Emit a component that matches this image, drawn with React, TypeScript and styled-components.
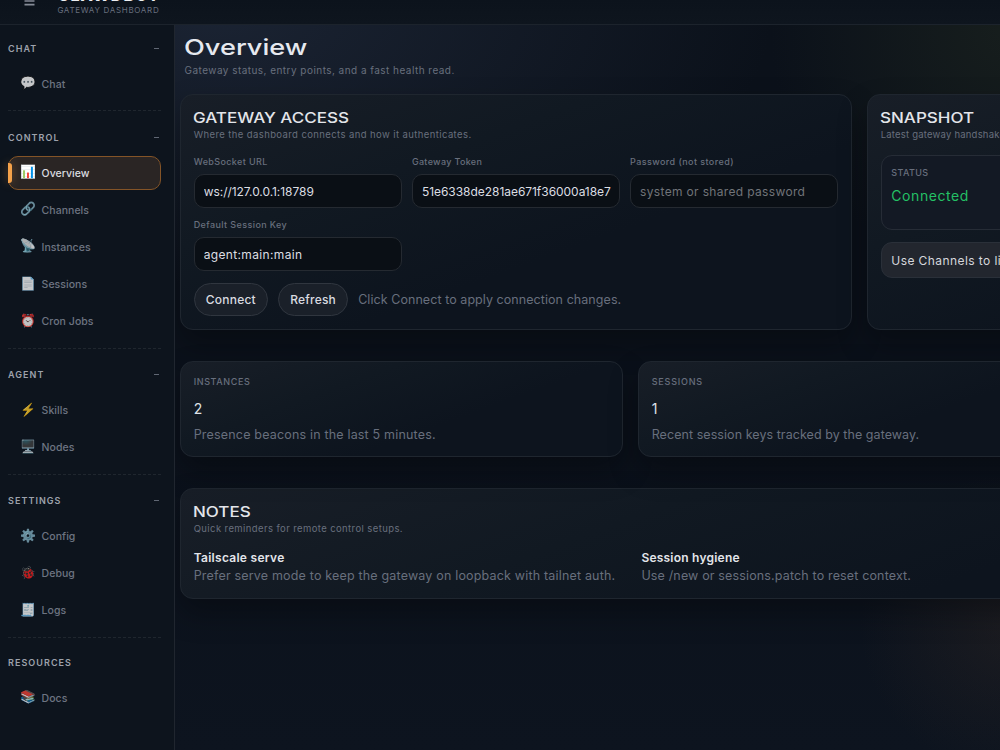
import React from "react";
import styled, { createGlobalStyle } from "styled-components";

const GlobalStyle = createGlobalStyle`
  *, *::before, *::after { box-sizing: border-box; }
  html, body, #root { height: 100%; }
  body {
    margin: 0;
    overflow: hidden;
    background: #0b111b;
    color: #dfe2e8;
    font-family: Inter, "Liberation Sans", sans-serif;
    -webkit-font-smoothing: antialiased;
  }
`;

const muted = "#686f7d";

const Shell = styled.div`
  display: grid;
  grid-template: 25px minmax(0, 1fr) / 175px minmax(0, 1fr);
  width: 100%;
  height: 750px;
  overflow: hidden;
  background:
    radial-gradient(620px 300px at 215px 15px, rgba(48, 60, 84, 0.42), transparent 90%),
    radial-gradient(240px 250px at 1010px 30px, rgba(45, 54, 34, 0.34), transparent),
    radial-gradient(150px 150px at 1010px 625px, rgba(75, 55, 42, 0.24), transparent),
    linear-gradient(180deg, #0b111a 0%, #0b111b 60%, #0d141f 100%);
`;

const Topbar = styled.header`
  grid-column: 1 / -1;
  display: flex;
  align-items: flex-end;
  gap: 22.4px;
  padding: 0 0 9.5px 24px;
  overflow: hidden;
  background: linear-gradient(180deg, #0c131c, #0e151e);
  border-bottom: 1px solid #1c232c;
`;

const MenuIcon = styled.svg`
  flex: none;
  width: 11px;
  height: 10px;
  margin-bottom: 8px;
`;

const Brand = styled.div`
  display: flex;
  flex-direction: column;
  justify-content: flex-end;
  align-self: flex-end;
`;

const BrandName = styled.span`
  height: 17.5px;
  font-size: 16px;
  font-weight: 800;
  line-height: 16px;
  letter-spacing: 1.1px;
  color: #eceef2;
`;

const BrandSub = styled.span`
  font-size: 8px;
  line-height: 10px;
  letter-spacing: 0.69px;
  white-space: nowrap;
  color: ${muted};
`;

const Sidebar = styled.nav`
  padding: 13.5px 13px 0 8px;
  background: #0d141d;
  border-right: 1px solid #20262f;
`;

const Group = styled.section`
  padding-bottom: 9.2px;
  & + & {
    border-top: 1px dashed rgba(255, 255, 255, 0.08);
    padding-top: 15.8px;
  }
`;

const GroupLabel = styled.div<{ $short?: boolean }>`
  display: flex;
  align-items: center;
  justify-content: space-between;
  height: ${(p) => (p.$short ? 18 : 20)}px;
  margin-bottom: ${(p) => (p.$short ? 9.4 : 8.8)}px;
  padding-right: 2px;
  font-size: 9px;
  font-weight: 600;
  letter-spacing: 1.05px;
  color: #9da2ac;
`;

const Dash = styled.span`
  width: 5px;
  height: 1px;
  background: #606773;
`;

const Items = styled.div`
  display: flex;
  flex-direction: column;
  gap: 3.2px;
`;

const Item = styled.a<{ $active?: boolean }>`
  position: relative;
  display: flex;
  align-items: center;
  gap: 6.6px;
  height: 34px;
  padding-left: 11px;
  border: 1px solid ${(p) => (p.$active ? "#845427" : "transparent")};
  border-radius: 10px;
  background: ${(p) => (p.$active ? "#2a2524" : "transparent")};
  color: ${(p) => (p.$active ? "#dcdde0" : "#6d7482")};
  font-size: 10.5px;
  font-weight: 450;
  letter-spacing: 0.04px;
`;

const ActiveMark = styled.i`
  position: absolute;
  left: -1px;
  top: 6px;
  width: 4px;
  height: 20px;
  border-radius: 0 3px 3px 0;
  background: #f5a24a;
  box-shadow: 0 0 10px rgba(245, 159, 74, 0.4);
`;

const Emoji = styled.span<{ $active?: boolean }>`
  width: 15px;
  margin-top: -2px;
  font-size: 12.8px;
  line-height: 16px;
  white-space: nowrap;
  text-indent: -0.5px;
  opacity: ${(p) => (p.$active ? 1 : 0.76)};
  color: #fff;
`;

const Main = styled.main`
  padding: 9px 0 0 5px;
  overflow: hidden;
`;

const Content = styled.div`
  width: 1359px;
`;

const PageHead = styled.div`
  height: 60.3px;
  padding: 0 0 0 4.5px;
`;

const PageTitle = styled.h1`
  width: max-content;
  margin: 0 0 0 -0.8px;
  font-size: 22px;
  font-weight: 500;
  line-height: 26px;
  color: #e6e9ef;
  transform: scaleX(1.235);
  transform-origin: left;
`;

const PageSub = styled.p`
  margin: 3px 0 0;
  font-size: 10px;
  line-height: 14px;
  letter-spacing: 0.46px;
  color: ${muted};
`;

const CardRow = styled.div<{ $cols: number; $gap: number }>`
  display: grid;
  grid-template-columns: repeat(${(p) => p.$cols}, minmax(0, 1fr));
  gap: 15px;
  margin-bottom: ${(p) => p.$gap}px;
`;

const Card = styled.section<{ $h: number }>`
  height: ${(p) => p.$h}px;
  padding: 13px 12.7px;
  border: 1px solid #1f262f;
  border-radius: 13px;
  background: linear-gradient(160deg, #181e27 0%, #111922 32%, #0d141e 62%);
  box-shadow: 0 14px 30px rgba(0, 0, 0, 0.3);
`;

const CardTitle = styled.h2`
  width: max-content;
  margin: 0 0 0 -0.3px;
  font-size: 14.5px;
  font-weight: 500;
  line-height: 19px;
  color: #e3e5ea;
  transform: scaleX(1.172);
  transform-origin: left;
`;

const CardSub = styled.p<{ $ls?: number }>`
  margin: 0;
  font-size: 9.5px;
  line-height: 15px;
  letter-spacing: ${(p) => p.$ls ?? 0.4}px;
  color: ${muted};
  white-space: nowrap;
`;

const Fields = styled.div`
  display: grid;
  grid-template-columns: repeat(3, 208.2px);
  gap: 10px;
  margin-top: 13px;
`;

const Field = styled.label<{ $ls: number }>`
  display: grid;
  gap: 4.5px;
  font-size: 9px;
  font-weight: 450;
  line-height: 14px;
  letter-spacing: ${(p) => p.$ls}px;
  color: ${muted};
`;

const Input = styled.input<{ $ls?: number }>`
  width: 100%;
  height: 34.5px;
  padding: 0 7px 0 9px;
  border: 1px solid #252a31;
  border-radius: 10px;
  outline: none;
  background: #0a0f15;
  color: #dcdee3;
  font-family: inherit;
  font-size: 12px;
  letter-spacing: ${(p) => p.$ls ?? 0}px;
  &::placeholder { color: #717479; opacity: 1; }
`;

const Actions = styled.div`
  display: flex;
  align-items: center;
  gap: 10px;
  margin-top: 11.5px;
`;

const Button = styled.button<{ $w: number }>`
  width: ${(p) => p.$w}px;
  height: 33.5px;
  padding: 0;
  border: 1px solid #30363f;
  border-radius: 17px;
  background: #1a2029;
  color: #d9dbe0;
  font-family: inherit;
  font-size: 12px;
  font-weight: 450;
  letter-spacing: 0.22px;
`;

const Text = styled.p<{ $ls: number; $top?: number }>`
  margin: ${(p) => p.$top ?? 0}px 0 0;
  font-size: 12.5px;
  line-height: 18px;
  letter-spacing: ${(p) => p.$ls}px;
  color: ${muted};
  white-space: nowrap;
`;

const StatLabel = styled.div<{ $ls: number }>`
  font-size: 9px;
  font-weight: 450;
  line-height: 13px;
  letter-spacing: ${(p) => p.$ls}px;
  color: ${muted};
`;

const StatValue = styled.div`
  margin-top: 12px;
  font-size: 14px;
  line-height: 18px;
  color: #dfe2e8;
`;

const StatusBox = styled.div`
  height: 75.5px;
  margin-top: 12.5px;
  padding: 10.5px 9.6px;
  border: 1px solid #262c36;
  border-radius: 11px;
  background: #131924;
`;

const StatusValue = styled.div`
  margin-top: 7.5px;
  font-size: 14px;
  line-height: 18px;
  letter-spacing: 0.57px;
  color: #24c065;
`;

const Callout = styled.div`
  display: flex;
  align-items: center;
  height: 36px;
  margin-top: 11.5px;
  padding: 1px 0 0 9.6px;
  border: 1px solid #2a3039;
  border-radius: 11px;
  background: #22262e;
  color: #d5d7dc;
  font-size: 12px;
  letter-spacing: 0.42px;
  white-space: nowrap;
`;

const Notes = styled.div`
  display: grid;
  grid-template-columns: repeat(3, minmax(0, 1fr));
  gap: 11.5px;
  margin-top: 13px;
`;

const NoteTitle = styled.div<{ $ls: number }>`
  font-size: 12px;
  font-weight: 600;
  line-height: 18px;
  letter-spacing: ${(p) => p.$ls}px;
  color: #e3e5ea;
`;

type Entry = [icon: string, label: string];
const groups: { label: string; items: Entry[]; fixed?: boolean }[] = [
  { label: "CHAT", items: [["💬", "Chat"]] },
  {
    label: "CONTROL",
    items: [
      ["📊", "Overview"],
      ["🔗", "Channels"],
      ["📡", "Instances"],
      ["📄", "Sessions"],
      ["⏰", "Cron Jobs"],
    ],
  },
  { label: "AGENT", items: [["⚡", "Skills"], ["🖥️", "Nodes"]] },
  { label: "SETTINGS", items: [["⚙️", "Config"], ["🐞", "Debug"], ["🧾", "Logs"]] },
  { label: "RESOURCES", items: [["📚", "Docs"]], fixed: true },
];

export default function App() {
  return (
    <Shell>
      <GlobalStyle />
      <Topbar>
        <MenuIcon viewBox="0 0 11 10" stroke="#858b96" strokeWidth="1.6">
          <path d="M0.5 0.6h10M0.5 4h10M0.5 7.6h10" />
        </MenuIcon>
        <Brand>
          <BrandName>CLAWDBOT</BrandName>
          <BrandSub>GATEWAY DASHBOARD</BrandSub>
        </Brand>
      </Topbar>
      <Sidebar>
        {groups.map((group) => (
          <Group key={group.label}>
            <GroupLabel $short={group.fixed}>
              {group.label}
              {!group.fixed && <Dash />}
            </GroupLabel>
            <Items>
              {group.items.map(([icon, label]) => {
                const active = label === "Overview";
                return (
                  <Item key={label} $active={active}>
                    {active && <ActiveMark />}
                    <Emoji $active={active}>{icon}</Emoji>
                    {label}
                  </Item>
                );
              })}
            </Items>
          </Group>
        ))}
      </Sidebar>
      <Main>
        <Content>
          <PageHead>
            <PageTitle>Overview</PageTitle>
            <PageSub>Gateway status, entry points, and a fast health read.</PageSub>
          </PageHead>
          <CardRow $cols={2} $gap={31.5}>
            <Card $h={235.4}>
              <CardTitle>GATEWAY ACCESS</CardTitle>
              <CardSub>Where the dashboard connects and how it authenticates.</CardSub>
              <Fields>
                <Field $ls={0.38}>
                  WebSocket URL
                  <Input defaultValue="ws://127.0.0.1:18789" $ls={-0.05} />
                </Field>
                <Field $ls={0.32}>
                  Gateway Token
                  <Input defaultValue="51e6338de281ae671f36000a18e7" $ls={-0.04} />
                </Field>
                <Field $ls={0.42}>
                  Password (not stored)
                  <Input placeholder="system or shared password" $ls={0.34} />
                </Field>
                <Field $ls={0.4}>
                  Default Session Key
                  <Input defaultValue="agent:main:main" $ls={0.35} />
                </Field>
              </Fields>
              <Actions>
                <Button $w={74.3}>Connect</Button>
                <Button $w={70.2}>Refresh</Button>
                <Text $ls={0.06}>Click Connect to apply connection changes.</Text>
              </Actions>
            </Card>
            <Card $h={235.4}>
              <CardTitle>SNAPSHOT</CardTitle>
              <CardSub $ls={0.21}>Latest gateway handshake information.</CardSub>
              <StatusBox>
                <StatLabel $ls={0.4}>STATUS</StatLabel>
                <StatusValue>Connected</StatusValue>
              </StatusBox>
              <Callout>Use Channels to link WhatsApp, Telegram, Discord, Signal, or iMessage.</Callout>
            </Card>
          </CardRow>
          <CardRow $cols={3} $gap={31}>
            <Card $h={96}>
              <StatLabel $ls={0.62}>INSTANCES</StatLabel>
              <StatValue>2</StatValue>
              <Text $ls={0.18} $top={8}>Presence beacons in the last 5 minutes.</Text>
            </Card>
            <Card $h={96}>
              <StatLabel $ls={0.8}>SESSIONS</StatLabel>
              <StatValue>1</StatValue>
              <Text $ls={0.06} $top={8}>Recent session keys tracked by the gateway.</Text>
            </Card>
          </CardRow>
          <Card $h={110.5}>
            <CardTitle>NOTES</CardTitle>
            <CardSub>Quick reminders for remote control setups.</CardSub>
            <Notes>
              <div>
                <NoteTitle $ls={0.28}>Tailscale serve</NoteTitle>
                <Text $ls={0.18}>Prefer serve mode to keep the gateway on loopback with tailnet auth.</Text>
              </div>
              <div>
                <NoteTitle $ls={0.22}>Session hygiene</NoteTitle>
                <Text $ls={0.15}>Use /new or sessions.patch to reset context.</Text>
              </div>
            </Notes>
          </Card>
        </Content>
      </Main>
    </Shell>
  );
}
